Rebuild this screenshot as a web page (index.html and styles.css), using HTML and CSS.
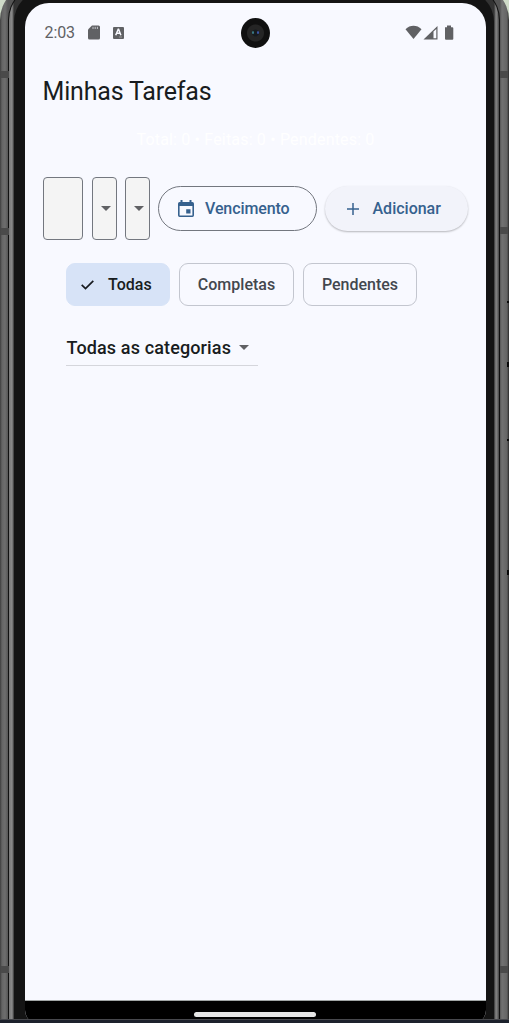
FILE: index.html
```html
<!DOCTYPE html>
<html lang="pt-BR">
<head>
<meta charset="utf-8">
<title>Minhas Tarefas</title>
<link rel="stylesheet" href="styles.css">
</head>
<body>
<div class="stage">
  <div class="rail">
    <div class="groove">
      <div class="chrome">
        <div class="bezel">
          <main class="screen">
            <header class="status">
              <span class="clock">2:03</span>
              <svg class="sd" width="12" height="15" viewBox="0 0 12 15"><path fill="#606164" d="M4 .5h6.500a1.500 1.500 0 0 1 1.500 1.500v11a1.500 1.500 0 0 1-1.500 1.500h-9A1.500 1.500 0 0 1 0 13V4.500z"/><path stroke="#c4c5ca" stroke-width="1" d="M5 1.800v2.200M7.200 1.800v2.200M9.400 1.800v2.200"/></svg>
              <svg class="akey" width="11" height="12" viewBox="0 0 11 12"><rect width="11" height="12" rx="1" fill="#606164"/><path fill="none" stroke="#f8f9ff" stroke-width="1.500" d="M2.700 8.300 5.200 2.300h.4l2.300 6M3.800 6.300h3.200"/><path stroke="#999" d="M6 10h3"/></svg>
              <span class="camera"><i></i><i></i></span>
              <svg class="signals" width="50" height="16" viewBox="0 0 50 16"><g fill="#606164"><path d="M.5 4.200C5-.3 12-.3 16.500 4.200L8.500 14z"/><path d="M32.500 1v13.500H18.500z"/><path d="M40 2.200h2V.5h4v1.700h1.300q1 0 1 1v10.600q0 1-1 1H41q-1 0-1-1z"/></g><path fill="#f8f9ff" d="M28.500 6.500 31.300 4v9.300h-2.800z"/></svg>
            </header>
            <h1>Minhas Tarefas</h1>
            <p class="summary">Total: 0 • Feitas: 0 • Pendentes: 0</p>
            <section class="entry">
              <div class="field wide"></div>
              <div class="field"><b class="arrow"></b></div>
              <div class="field"><b class="arrow"></b></div>
              <button class="pill due"><svg width="16" height="18" viewBox="0 0 16 18"><path fill="#36618e" fill-rule="evenodd" d="M2.500 0h2v2h7V0h2v2h.7A1.700 1.700 0 0 1 16 3.700v11.600a1.700 1.700 0 0 1-1.800 1.700H1.800A1.700 1.700 0 0 1 0 15.300V3.700A1.700 1.700 0 0 1 1.800 2h.7zM1.600 6v9.400h12.800V6z"/><path fill="#36618e" d="M8.200 9.300h4.300v4.200H8.200z"/></svg><span>Vencimento</span></button>
              <button class="pill add"><svg width="12" height="12" viewBox="0 0 12 12"><path stroke="#36618e" stroke-width="1.500" d="M6 0v12M0 6h12"/></svg><span>Adicionar</span></button>
            </section>
            <nav class="chips">
              <button class="chip chosen"><svg width="13" height="10" viewBox="0 0 13 10"><path fill="none" stroke="#181c20" stroke-width="1.700" d="M.7 4.900 4.500 8.600 12.300.8"/></svg><span>Todas</span></button>
              <button class="chip all-done">Completas</button>
              <button class="chip pending">Pendentes</button>
            </nav>
            <div class="category"><span>Todas as categorias</span><b class="arrow"></b></div>
            <div class="space"></div>
            <footer class="gesture"><span></span></footer>
          </main>
        </div>
      </div>
    </div>
  </div>
  <i class="seam left high"></i><i class="seam left mid"></i><i class="seam left low"></i>
  <i class="seam right high"></i><i class="seam right mid"></i><i class="seam right low"></i>
  <i class="key k1"></i><i class="key k2"></i><i class="key k3"></i><i class="key k4"></i>
  <div class="desk"></div>
</div>
</body>
</html>
```
FILE: styles.css
```css
* { box-sizing: border-box; }
body { margin: 0; font-family: Roboto, sans-serif; color: #181c20; background: #cfdbc8; }
.stage { position: relative; width: 509px; height: 1023px; overflow: hidden; }
.rail { height: 1060px; margin-top: -16px; padding: 1px 9px 0 8px; border-radius: 36px 36px 0 0; background: linear-gradient(90deg, #3d3d3d, #646464 2px, #6e6e6e 5px, #555 8px, #555 500px, #727272 502px, #646464 507px, #292929); }
.groove { height: 100%; padding: 1px 1px 0; border-radius: 35px 35px 0 0; background: #111; }
.chrome { height: 100%; padding: 4px 5px 0; border-radius: 34px 34px 0 0; background: linear-gradient(90deg, #777, #8b8b8b 3px, #333 5px, #333 485px, #858585 487px, #777 488px, #444); }
.bezel { height: 100%; padding: 13px 8px 0 11px; border-radius: 32px 32px 0 0; background: #141414; }
.screen { position: relative; display: flex; flex-direction: column; height: 1021px; width: 461px; border-radius: 24px 24px 14px 14px; overflow: hidden; background: #f8f9ff; }
.status { display: flex; align-items: center; height: 59px; padding: 0 31px 0 19.500px; color: #606164; }
.clock { width: 31px; font-size: 16px; letter-spacing: -.1px; }
.sd { margin-left: 12.500px; }
.akey { margin-left: 13px; }
.camera { display: flex; justify-content: center; align-items: center; gap: 3px; width: 29px; height: 30px; margin-left: 116.500px; border-radius: 50%; background: radial-gradient(circle, #161b1f 0 3px, #252525 4px 8px, #101010 9px); }
.camera i { width: 2px; height: 3px; background: #3c7c88; border-radius: 50%; }
.camera i + i { background: #3d57ad; }
.signals { margin-left: auto; }
h1 { margin: 12px 0 0 17.500px; font-size: 25px; line-height: 36px; font-weight: 400; letter-spacing: -.18px; }
.summary { margin: 20px 0 0; text-align: center; font-size: 16px; line-height: 20px; letter-spacing: .18px; color: #fff; }
.entry { display: flex; align-items: center; height: 63px; margin: 27px 18px 0 18px; }
.field { flex: none; display: flex; align-items: center; justify-content: flex-end; padding-right: 5px; width: 24.500px; height: 63px; margin-right: 8.500px; border: 1px solid #73777f; border-radius: 4px; background: #f4f4f4; }
.wide { width: 40px; margin-right: 9px; }
.arrow { flex: none; border: 5.500px solid transparent; border-top-color: #606164; border-bottom: 0; }
.pill { flex: none; display: flex; align-items: center; height: 45px; padding: 0; border-radius: 23px; color: #36618e; background: transparent; font: 500 16px/20px Roboto, sans-serif; letter-spacing: -.1px; }
.due { width: 159px; padding-left: 19px; gap: 11px; border: 1px solid #73777f; }
.due span, .add span, .chip { padding-top: 1px; }
.add { width: 143px; padding-left: 22px; gap: 13.500px; border: 0; margin-left: 8px; background: #f2f3fa; box-shadow: 0 1px 2px #0004; letter-spacing: 0; }
.chips { display: flex; gap: 9px; margin: 23px 0 0 41px; }
.chip { display: flex; align-items: center; justify-content: center; height: 43px; padding: 1px 0 0; border: 1px solid #c3c6cf; border-radius: 9px; background: transparent; color: #43474e; font: 500 16px/20px Roboto, sans-serif; letter-spacing: 0; }
.chosen { width: 104px; justify-content: flex-start; padding-left: 14px; gap: 14px; color: #181c20; background: #d7e3f7; border-color: #d7e3f7; }
.all-done { width: 115px; }
.pending { width: 114px; }
.category { display: flex; align-items: center; gap: 8px; width: 192px; height: 38px; margin: 22px 0 0 41px; border-bottom: 1px solid #d5d6dc; padding: 1px 0 0 .5px; font-size: 18px; font-weight: 500; letter-spacing: .13px; white-space: nowrap; }
.space { flex: 1; }
.gesture { display: flex; justify-content: center; height: 24px; padding: 11px 1px 0 0; border-top: 1px solid #a0a5a5; background: #000; }
.gesture span { width: 122px; height: 5px; border-radius: 3px; background: #e6e6e6; }
.seam { position: absolute; width: 8px; height: 7px; background: #4a4a4a; }
.left { left: 1px; }
.right { left: 500px; }
.high { top: 71px; }
.mid { top: 228px; }
.low { top: 966px; }
.right.mid { top: 227px; }
.key { position: absolute; left: 507px; width: 2px; height: 5px; background: #080808; }
.k1 { top: 301px; height: 2px; }
.k2 { top: 362px; }
.k3 { top: 439px; height: 2px; }
.k4 { top: 570px; }
.desk { position: absolute; top: 1019px; width: 100%; height: 4px; border-top: 1px solid #47484d; background: #1c212c; }
```
